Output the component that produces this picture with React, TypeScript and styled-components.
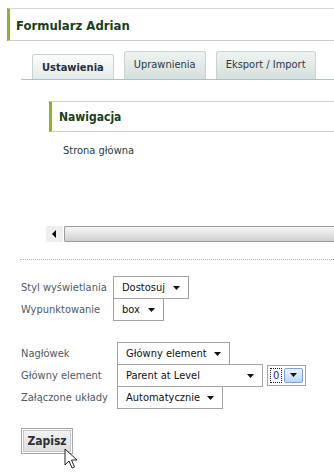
import { createGlobalStyle, styled } from "styled-components";

const Global = createGlobalStyle`
    html, body {
        margin: 0;
        padding: 0;
        background: #ffffff;
    }
    body {
        font-family: "DejaVu Sans Condensed", "Liberation Sans", sans-serif;
        font-size: 11px;
    }
`;

const tabs = ["Ustawienia", "Uprawnienia", "Eksport / Import"];

export default function App()
{
    return (
        <Page>
            <Global />
            <Header>Formularz Adrian</Header>

            <TabBar>
                {
                    tabs.map((t, i) => (
                        <Tab key={t} $active={i === 0}>{ t }</Tab>
                    ))
                }
            </TabBar>

            <Panel>
                <SubHeader>Nawigacja</SubHeader>
                <NavItem>Strona główna</NavItem>
                <Scrollbar>
                    <ScrollButton>
                        <svg width="5" height="8" viewBox="0 0 5 8">
                            <path d="M4 0 L0 4 L4 8 Z" fill="#000" />
                        </svg>
                    </ScrollButton>
                    <ScrollThumb />
                </Scrollbar>
            </Panel>

            <Divider />

            <Form>
                <FieldGroup $selectLeft={113}>
                    <Label>Styl wyświetlania</Label>
                    <Select $width={76}><span>Dostosuj</span><Arrow /></Select>
                    <Label>Wypunktowanie</Label>
                    <Select $width={51}><span>box</span><Arrow /></Select>
                </FieldGroup>

                <FieldGroup $selectLeft={117} $top={22}>
                    <Label>Nagłówek</Label>
                    <Select $width={107}><span>Główny element</span><Arrow /></Select>
                    <Label>Główny element</Label>
                    <InlineRow>
                        <Select $width={146}><span>Parent at Level</span><Arrow /></Select>
                        <FocusSelect>
                            <FocusText>0</FocusText>
                            <FocusArrow><Arrow /></FocusArrow>
                        </FocusSelect>
                    </InlineRow>
                    <Label>Załączone układy</Label>
                    <Select $width={102}><span>Automatycznie</span><Arrow /></Select>
                </FieldGroup>

                <ButtonWrap>
                    <SaveButton>Zapisz</SaveButton>
                    <Cursor width="14" height="22" viewBox="0 0 14 22">
                        <path
                            d="M1 1 L1 17 L5 13 L8 20 L10.5 19 L7.5 12 L13 12 Z"
                            fill="#fff"
                            stroke="#222"
                            strokeWidth="1"
                            strokeLinejoin="round"
                        />
                    </Cursor>
                </ButtonWrap>
            </Form>
        </Page>
    );
}

function Arrow()
{
    return (
        <svg width="7" height="4" viewBox="0 0 7 4">
            <path d="M0 0 H7 L3.5 4 Z" fill="#111" />
        </svg>
    );
}

const Page = styled.div`
    width: 334px;
    height: 474px;
    overflow: hidden;
    padding-top: 8px;
    box-sizing: border-box;
`;

const Header = styled.h1`
    margin: 0 0 0 7px;
    height: 29px;
    display: flex;
    align-items: center;
    padding-left: 6px;
    padding-top: 2px;
    box-sizing: content-box;
    border-top: 1px solid #d6d6d6;
    border-bottom: 1px solid #cfcfcf;
    border-left: 3px solid #8fb321;
    color: #173f1a;
    font-size: 13px;
    font-weight: bold;
`;

const TabBar = styled.div`
    display: flex;
    align-items: flex-end;
    gap: 10px;
    margin: 10px 0 0 21px;
    padding-left: 11px;
    height: 28px;
    border-bottom: 1px solid #a7bfe2;
`;

const Tab = styled.div<{ $active?: boolean }>`
    box-sizing: border-box;
    height: ${p => (p.$active ? "25px" : "28px")};
    padding: 0 9px;
    display: flex;
    align-items: center;
    border: 1px solid #c9d3cf;
    border-bottom: none;
    border-radius: 3px 3px 0 0;
    background: ${p => (p.$active
        ? "linear-gradient(#fbfcfb, #e4ebe7)"
        : "linear-gradient(#eef3f1, #d5e0db)")};
    color: ${p => (p.$active ? "#23313f" : "#2c3a47")};
    font-weight: ${p => (p.$active ? "bold" : "normal")};
    font-size: 11px;
    padding-bottom: ${p => (p.$active ? "0" : "2px")};
    white-space: nowrap;
`;

const Panel = styled.div`
    padding: 21px 0 0 46px;
`;

const SubHeader = styled.h2`
    margin: 0 0 0 3px;
    height: 29px;
    display: flex;
    align-items: center;
    padding-left: 7px;
    border-top: 1px solid #d0d0d0;
    border-bottom: 1px solid #cdcdcd;
    border-left: 3px solid #8fb321;
    color: #173f1a;
    font-size: 12px;
    font-weight: bold;
`;

const NavItem = styled.div`
    margin: 12px 0 0 17px;
    color: #263b45;
    font-size: 11px;
`;

const Scrollbar = styled.div`
    margin-top: 69px;
    display: flex;
    height: 16px;
`;

const ScrollButton = styled.div`
    width: 17px;
    height: 16px;
    background: #eeeeee;
    display: flex;
    align-items: center;
    justify-content: center;
`;

const ScrollThumb = styled.div`
    flex: 1;
    margin-left: 1px;
    border: 1px solid #9c9c9c;
    border-right: none;
    border-radius: 2px 0 0 2px;
    background: linear-gradient(#f6f6f6, #e6e6e6 45%, #cdcdcd);
`;

const Divider = styled.hr`
    margin: 17px 0 0 20px;
    border: none;
    border-top: 1px dotted #b5b5b5;
    height: 0;
`;

const Form = styled.div`
    padding: 16px 0 0 21px;
`;

const FieldGroup = styled.div<{ $selectLeft: number; $top?: number }>`
    display: grid;
    grid-template-columns: ${p => p.$selectLeft - 21}px auto;
    align-items: center;
    justify-items: start;
    margin-top: ${p => p.$top || 0}px;
`;

const Label = styled.span`
    color: #4c5a66;
    font-size: 11px;
    white-space: nowrap;
`;

const Select = styled.div<{ $width: number }>`
    box-sizing: border-box;
    min-width: ${p => p.$width}px;
    height: 23px;
    margin-bottom: -1px;
    display: flex;
    align-items: center;
    justify-content: space-between;
    gap: 7px;
    padding: 0 8px 0 8px;
    border: 1px solid #a3a3a3;
    background: #fff;
    color: #111;
    font-size: 11px;
    white-space: nowrap;
`;

const InlineRow = styled.div`
    display: flex;
    align-items: center;
    gap: 4px;
`;

const FocusSelect = styled.div`
    box-sizing: border-box;
    width: 39px;
    height: 21px;
    display: flex;
    align-items: center;
    gap: 2px;
    padding: 2px;
    border: 1px solid #a3a3a3;
    background: #fff;
`;

const FocusText = styled.span`
    box-sizing: border-box;
    height: 15px;
    padding: 0 2px;
    display: flex;
    align-items: center;
    border: 1px dotted #222;
    color: #1a1ad0;
    font-size: 11px;
`;

const FocusArrow = styled.div`
    box-sizing: border-box;
    flex: 1;
    height: 15px;
    display: flex;
    align-items: center;
    justify-content: center;
    border: 1px solid #7ea3d6;
    border-radius: 2px;
    background: linear-gradient(#eaf3fd, #bcd6f4);
`;

const ButtonWrap = styled.div`
    position: relative;
    margin-top: 20px;
    width: 52px;
`;

const SaveButton = styled.button`
    box-sizing: border-box;
    width: 52px;
    height: 26px;
    padding: 0;
    border: 1px solid #a9a9a9;
    box-shadow: inset 0 0 0 1px #ffffff, inset 0 0 0 2px #c9c9c9;
    background: linear-gradient(#f4f4f4, #dcdcdc);
    color: #2a2f36;
    font-family: "DejaVu Sans Condensed", "Liberation Sans", sans-serif;
    font-size: 12px;
    font-weight: bold;
`;

const Cursor = styled.svg`
    position: absolute;
    left: 43px;
    top: 20px;
`;
